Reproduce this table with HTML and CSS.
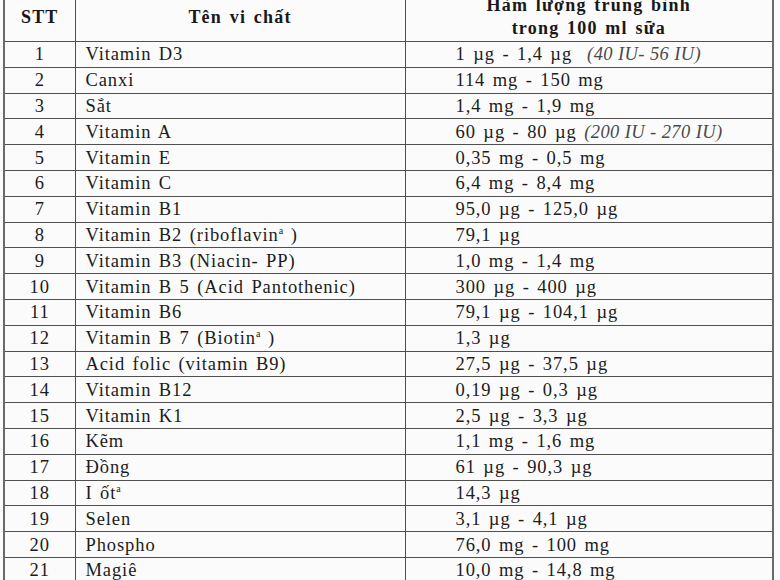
FILE: index.html
```html
<!DOCTYPE html>
<html lang="vi">
<head>
<meta charset="utf-8">
<link rel="stylesheet" href="styles.css">
</head>
<body>
<table class="nutri">
  <colgroup><col class="c-stt"><col class="c-name"><col class="c-val"></colgroup>
  <thead>
    <tr><th>STT</th><th>Tên vi chất</th><th>Hàm lượng trung bình<br>trong 100 ml sữa</th></tr>
  </thead>
  <tbody>
    <tr><td>1</td><td>Vitamin D3</td><td>1 µg - 1,4 µg&nbsp; <em>(40 IU- 56 IU)</em></td></tr>
    <tr><td>2</td><td>Canxi</td><td>114 mg - 150 mg</td></tr>
    <tr><td>3</td><td>Sắt</td><td>1,4 mg - 1,9 mg</td></tr>
    <tr><td>4</td><td>Vitamin A</td><td>60 µg - 80 µg <em>(200 IU - 270 IU)</em></td></tr>
    <tr><td>5</td><td>Vitamin E</td><td>0,35 mg - 0,5 mg</td></tr>
    <tr><td>6</td><td>Vitamin C</td><td>6,4 mg - 8,4 mg</td></tr>
    <tr><td>7</td><td>Vitamin B1</td><td>95,0 µg - 125,0 µg</td></tr>
    <tr><td>8</td><td>Vitamin B2 (riboflavin<sup>a</sup> )</td><td>79,1 µg</td></tr>
    <tr><td>9</td><td>Vitamin B3 (Niacin- PP)</td><td>1,0 mg - 1,4 mg</td></tr>
    <tr><td>10</td><td>Vitamin B 5 (Acid Pantothenic)</td><td>300 µg - 400 µg</td></tr>
    <tr><td>11</td><td>Vitamin B6</td><td>79,1 µg - 104,1 µg</td></tr>
    <tr><td>12</td><td>Vitamin B 7 (Biotin<sup>a</sup> )</td><td>1,3 µg</td></tr>
    <tr><td>13</td><td>Acid folic (vitamin B9)</td><td>27,5 µg - 37,5 µg</td></tr>
    <tr><td>14</td><td>Vitamin B12</td><td>0,19 µg - 0,3 µg</td></tr>
    <tr><td>15</td><td>Vitamin K1</td><td>2,5 µg - 3,3 µg</td></tr>
    <tr><td>16</td><td>Kẽm</td><td>1,1 mg - 1,6 mg</td></tr>
    <tr><td>17</td><td>Đồng</td><td>61 µg - 90,3 µg</td></tr>
    <tr><td>18</td><td>I ốt<sup>a</sup></td><td>14,3 µg</td></tr>
    <tr><td>19</td><td>Selen</td><td>3,1 µg - 4,1 µg</td></tr>
    <tr><td>20</td><td>Phospho</td><td>76,0 mg - 100 mg</td></tr>
    <tr><td>21</td><td>Magiê</td><td>10,0 mg - 14,8 mg</td></tr>
  </tbody>
</table>
</body>
</html>
```
FILE: styles.css
```css
html, body {
  margin: 0;
  padding: 0;
  background: #fbfbfb;
  overflow: hidden;
}
body {
  font-family: "Liberation Serif", "Times New Roman", serif;
  color: #1c1c1c;
}
.nutri {
  border-collapse: collapse;
  table-layout: fixed;
  width: 769px;
  margin: -9px 0 0 3px;
  border: 2px solid #6a6a6a;
}
.c-stt { width: 71px; }
.c-name { width: 330px; }
.c-val { width: 368px; }
.nutri th, .nutri td {
  border: 1px solid #505050;
  padding: 0;
  white-space: nowrap;
}
.nutri th {
  height: 48px;
  font-size: 18px;
  font-weight: bold;
  line-height: 23px;
  text-align: center;
  letter-spacing: 1.2px;
  word-spacing: 2px;
  color: #181818;
}
.nutri td {
  height: 24.8px;
  font-size: 18.5px;
  line-height: 20px;
  letter-spacing: 0.9px;
  word-spacing: 2px;
}
.nutri td:first-child { text-align: center; }
.nutri td:nth-child(2) { padding-left: 10px; }
.nutri td:nth-child(3) { padding-left: 50px; }
.nutri em {
  font-style: italic;
  color: #4a4a4a;
  letter-spacing: 0.4px;
  word-spacing: 0;
}
.nutri sup {
  font-size: 10px;
  vertical-align: 7px;
  line-height: 0;
  letter-spacing: 0;
}
```
